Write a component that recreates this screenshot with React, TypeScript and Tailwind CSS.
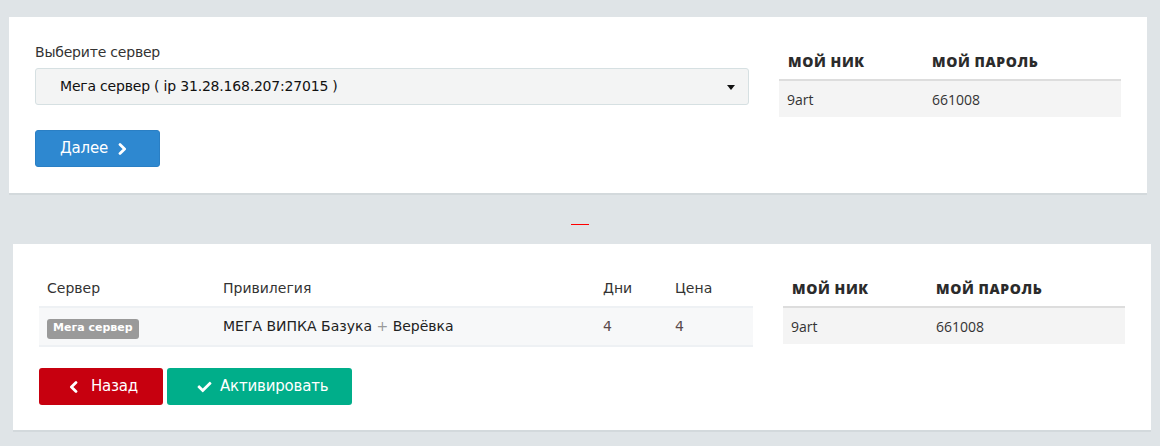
import React from "react";
import { FaCheck } from "react-icons/fa";

const dv = { fontFamily: '"DejaVu Sans", Verdana, sans-serif' } as const;
const os = { fontFamily: '"Open Sans", "Noto Sans", sans-serif' } as const;

function Chevron({ dir }: { dir: "left" | "right" }) {
  return (
    <svg width="9" height="12" viewBox="0 0 9 12" className="shrink-0">
      <polyline
        points={dir === "right" ? "2,1.6 6.6,6 2,10.4" : "7,1.6 2.4,6 7,10.4"}
        fill="none"
        stroke="white"
        strokeWidth="2.8"
        strokeLinecap="round"
        strokeLinejoin="round"
      />
    </svg>
  );
}

function Creds() {
  return (
    <table className="w-full border-collapse" style={os}>
      <thead>
        <tr className="border-b-2 border-[#dddddd]">
          <th className="h-[37px] w-[145px] pl-[9px] text-left text-[14px] font-extrabold text-[#2b2b2b] tracking-[0.6px]">МОЙ НИК</th>
          <th className="h-[37px] pl-[8px] text-left text-[14px] font-extrabold text-[#2b2b2b] tracking-[0.6px]">МОЙ ПАРОЛЬ</th>
        </tr>
      </thead>
      <tbody>
        <tr className="bg-[#f4f4f4]">
          <td className="h-[37px] pl-[8px] text-[14px] text-[#333]">9art</td>
          <td className="h-[37px] pl-[8px] text-[14px] text-[#333]">661008</td>
        </tr>
      </tbody>
    </table>
  );
}

export default function App() {
  return (
    <div className="min-h-[446px] w-[1160px] bg-[#dfe4e7] pt-[17px] pb-[14px]">
      {/* Card 1 */}
      <div className="ml-[9px] w-[1138px] bg-white px-[26px] pt-[26px] pb-[26px] shadow-[0_2px_0_#d3d9dc]">
        <div className="flex gap-[30px]">
          <div className="w-[714px]">
            <div className="h-[18px] text-[14px] leading-[18px] tracking-[-0.2px] text-[#333]" style={dv}>Выберите сервер</div>
            <div className="mt-[7px] flex h-[37px] items-center justify-between rounded-[3px] border border-[#d6e0e2] bg-[#f3f4f4] pl-[24px] pr-[13px]">
              <span className="text-[14px] tracking-[-0.2px] text-[#111]" style={dv}>Мега сервер ( ip 31.28.168.207:27015 )</span>
              <span className="mt-[1px] h-0 w-0 border-x-[4px] border-t-[5px] border-x-transparent border-t-[#111]" />
            </div>
            <button className="mt-[25px] flex h-[37px] w-[125px] items-center rounded-[3px] border border-[#2a7fc4] bg-[#2e88d0] pl-[24px] text-[15px] tracking-[-0.2px] text-white" style={dv}>
              <span>Далее</span>
              <span className="ml-[10px]"><Chevron dir="right" /></span>
            </button>
          </div>
          <div className="w-[342px]">
            <Creds />
          </div>
        </div>
      </div>

      {/* Divider */}
      <div className="mt-[31px] mb-[19px] ml-[571px] h-px w-[18px] bg-[#ff0000]" />

      {/* Card 2 */}
      <div className="ml-[13px] w-[1138px] bg-white px-[26px] pt-[26px] pb-[25px] shadow-[0_2px_0_#d3d9dc]">
        <div className="flex gap-[30px]">
          <div className="w-[714px]">
            <table className="w-full border-collapse" style={dv}>
              <thead>
                <tr>
                  <th className="h-[37px] w-[176px] pl-[8px] text-left text-[14px] font-normal text-[#333]">Сервер</th>
                  <th className="h-[37px] w-[380px] pl-[8px] text-left text-[14px] font-normal text-[#333]">Привилегия</th>
                  <th className="h-[37px] w-[72px] pl-[8px] text-left text-[14px] font-normal text-[#333]">Дни</th>
                  <th className="h-[37px] pl-[8px] text-left text-[14px] font-normal text-[#333]">Цена</th>
                </tr>
              </thead>
              <tbody>
                <tr className="border-y-2 border-[#eef1f4] bg-[#f7f8f9]">
                  <td className="h-[39px] pl-[8px]">
                    <span className="inline-flex h-[20px] items-center rounded-[3px] bg-[#9a9a9a] px-[6px] text-[11px] font-bold text-white">Мега сервер</span>
                  </td>
                  <td className="h-[39px] pl-[8px] text-[14px] text-[#222]">
                    МЕГА ВИПКА Базука <span className="text-[#999]">+</span> Верёвка
                  </td>
                  <td className="h-[39px] pl-[8px] text-[14px] text-[#5a4a4a]">4</td>
                  <td className="h-[39px] pl-[8px] text-[14px] text-[#5a4a4a]">4</td>
                </tr>
              </tbody>
            </table>
            <div className="mt-[21px] flex gap-[4px]" style={dv}>
              <button className="flex h-[37px] w-[124px] items-center rounded-[3px] bg-[#c7000f] pl-[30px] text-[15px] tracking-[-0.2px] text-white">
                <Chevron dir="left" />
                <span className="ml-[13px]">Назад</span>
              </button>
              <button className="flex h-[37px] w-[185px] items-center rounded-[3px] bg-[#00ae8a] pl-[30px] text-[15px] tracking-[-0.2px] text-white">
                <FaCheck className="h-[14px] w-[15px]" />
                <span className="ml-[8px]">Активировать</span>
              </button>
            </div>
          </div>
          <div className="w-[342px]">
            <Creds />
          </div>
        </div>
      </div>
    </div>
  );
}
